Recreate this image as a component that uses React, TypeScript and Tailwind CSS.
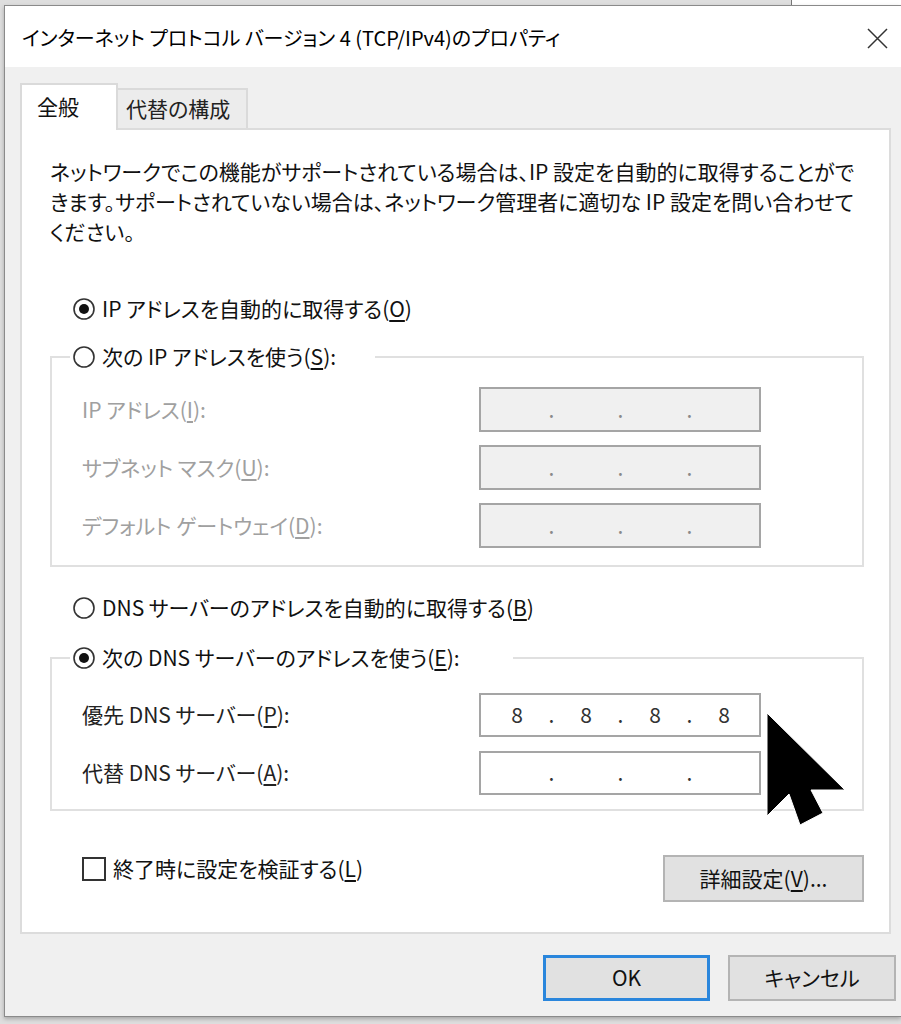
import React from "react";

const font = "font-['Noto_Sans_CJK_JP',sans-serif] [font-feature-settings:'palt']";

function Radio({ checked }: { checked?: boolean }) {
  return (
    <svg width="22" height="22" viewBox="0 0 22 22" className="shrink-0">
      <circle cx="11" cy="11" r="10" fill="white" stroke="#333" strokeWidth="1.6" />
      {checked && <circle cx="11" cy="11" r="5" fill="#111" />}
    </svg>
  );
}

function Key({ k }: { k: string }) {
  return <span className="underline underline-offset-[3px]">{k}</span>;
}

function IpBox({ values, disabled }: { values?: string[]; disabled?: boolean }) {
  const v = values ?? ["", "", "", ""];
  const dot = disabled ? "text-[#8a8a8a]" : "text-[#333]";
  return (
    <div
      className={`h-[45px] border-2 border-[#a5a5a5] flex items-center pl-[5px] ${
        disabled ? "bg-[#f0f0f0]" : "bg-white"
      }`}
    >
      {v.map((s, i) => (
        <React.Fragment key={i}>
          <span className="w-[62px] text-center text-[#333]">{s}</span>
          {i < 3 && <span className={`w-[7px] text-center ${dot}`}>.</span>}
        </React.Fragment>
      ))}
    </div>
  );
}

export default function App() {
  return (
    <div className={`relative w-[901px] h-[1024px] overflow-hidden bg-[#dedede] flex flex-col text-[21px] text-[#111] ${font}`}>
      <div className="h-[5px] flex shrink-0">
        <div className="ml-auto w-[110px] bg-white border-l border-[#777]" />
      </div>

      <div className="ml-[4px] mb-[7px] flex-1 flex flex-col border-l border-t border-b border-[#8a8a8a] bg-[#f0f0f0] shadow-[0_2px_4px_rgba(0,0,0,0.25)]">
        {/* title bar */}
        <div className="h-[61px] shrink-0 bg-white flex items-center justify-between pl-[17px] pr-[13px] pt-[3px]">
          <span className="whitespace-nowrap text-black text-[20px]">インターネット プロトコル バージョン 4 (TCP/IPv4)のプロパティ</span>
          <svg width="21" height="21" viewBox="0 0 21 21">
            <path d="M1 1L20 20M20 1L1 20" stroke="#333" strokeWidth="1.5" />
          </svg>
        </div>

        {/* client */}
        <div className="flex-1 flex flex-col pt-[16px] pl-[15px]">
          <div className="flex items-end h-[45px]">
            <div className="relative z-10 -mb-[2px] h-[47px] w-[98px] bg-white border-2 border-b-0 border-[#dadada] flex items-center pl-[15px] pb-[2px]">
              全般
            </div>
            <div className="h-[40px] w-[130px] bg-[#ececec] border-2 border-l-0 border-b-0 border-[#dadada] flex items-center pl-[8px] text-[#222]">
              代替の構成
            </div>
          </div>

          <div className="mr-[10px] bg-white border-2 border-[#dcdcdc] pt-[26px] pl-[28px] pr-[25px] pb-[30px] flex flex-col">
            <div className="leading-[30px] whitespace-nowrap">
              <div>ネットワークでこの機能がサポートされている場合は、IP 設定を自動的に取得することがで</div>
              <div>きます。サポートされていない場合は、ネットワーク管理者に適切な IP 設定を問い合わせて</div>
              <div>ください。</div>
            </div>

            <div className="mt-[48px] h-[30px] flex items-center gap-[7px] pl-[23px]">
              <Radio checked />
              <span>
                IP アドレスを自動的に取得する(<Key k="O" />)
              </span>
            </div>

            <fieldset className="mt-[18px] border-2 border-[#e0e0e0]">
              <legend className="ml-[18px] w-[305px] h-[30px] flex items-center gap-[7px] pl-[3px] bg-white">
                <Radio />
                <span>
                  次の IP アドレスを使う(<Key k="S" />):
                </span>
              </legend>
              <div className="pt-[15px] pb-[17px] pl-[30px] grid grid-cols-[397px_282px] gap-y-[13px] items-center text-[#a0a0a0]">
                <span>
                  IP アドレス(<Key k="I" />):
                </span>
                <IpBox disabled />
                <span>
                  サブネット マスク(<Key k="U" />):
                </span>
                <IpBox disabled />
                <span>
                  デフォルト ゲートウェイ(<Key k="D" />):
                </span>
                <IpBox disabled />
              </div>
            </fieldset>

            <div className="mt-[26px] h-[30px] flex items-center gap-[7px] pl-[23px]">
              <Radio />
              <span>
                DNS サーバーのアドレスを自動的に取得する(<Key k="B" />)
              </span>
            </div>

            <fieldset className="mt-[20px] border-2 border-[#e0e0e0]">
              <legend className="ml-[18px] w-[443px] h-[30px] flex items-center gap-[7px] pl-[3px] bg-white">
                <Radio checked />
                <span>
                  次の DNS サーバーのアドレスを使う(<Key k="E" />):
                </span>
              </legend>
              <div className="pt-[20px] pb-[14px] pl-[30px] grid grid-cols-[397px_282px] gap-y-[14px] items-center text-[#222]">
                <span>
                  優先 DNS サーバー(<Key k="P" />):
                </span>
                <div className="[&>div]:h-[44px]">
                  <IpBox values={["8", "8", "8", "8"]} />
                </div>
                <span>
                  代替 DNS サーバー(<Key k="A" />):
                </span>
                <div className="[&>div]:h-[44px]">
                  <IpBox />
                </div>
              </div>
            </fieldset>

            <div className="mt-[43px] flex items-start justify-between">
              <div className="h-[30px] flex items-center gap-[7px] pl-[32px]">
                <span className="w-[24px] h-[24px] border-2 border-[#333] bg-white" />
                <span>
                  終了時に設定を検証する(<Key k="L" />)
                </span>
              </div>
              <button className="mt-[1px] h-[47px] w-[201px] bg-[#e1e1e1] border-2 border-[#b4b4b4] text-[#111]">
                詳細設定(<Key k="V" />)...
              </button>
            </div>
          </div>

          <div className="mt-[21px] flex justify-end gap-[18px] pr-[5px]">
            <button className="h-[46px] w-[167px] bg-[#e1e1e1] border-[3px] border-[#2a86dc] text-[#111]">OK</button>
            <button className="h-[46px] w-[168px] bg-[#e1e1e1] border-2 border-[#b4b4b4] text-[#111]">キャンセル</button>
          </div>
        </div>
      </div>

      {/* mouse pointer */}
      <svg className="absolute left-[766px] top-[712px]" width="82" height="116" viewBox="0 0 82 116">
        <polygon points="1,1 1,104 23,82 34,113 57,101 45,78 79,78" fill="#000" stroke="#fff" strokeWidth="1" />
      </svg>
    </div>
  );
}
